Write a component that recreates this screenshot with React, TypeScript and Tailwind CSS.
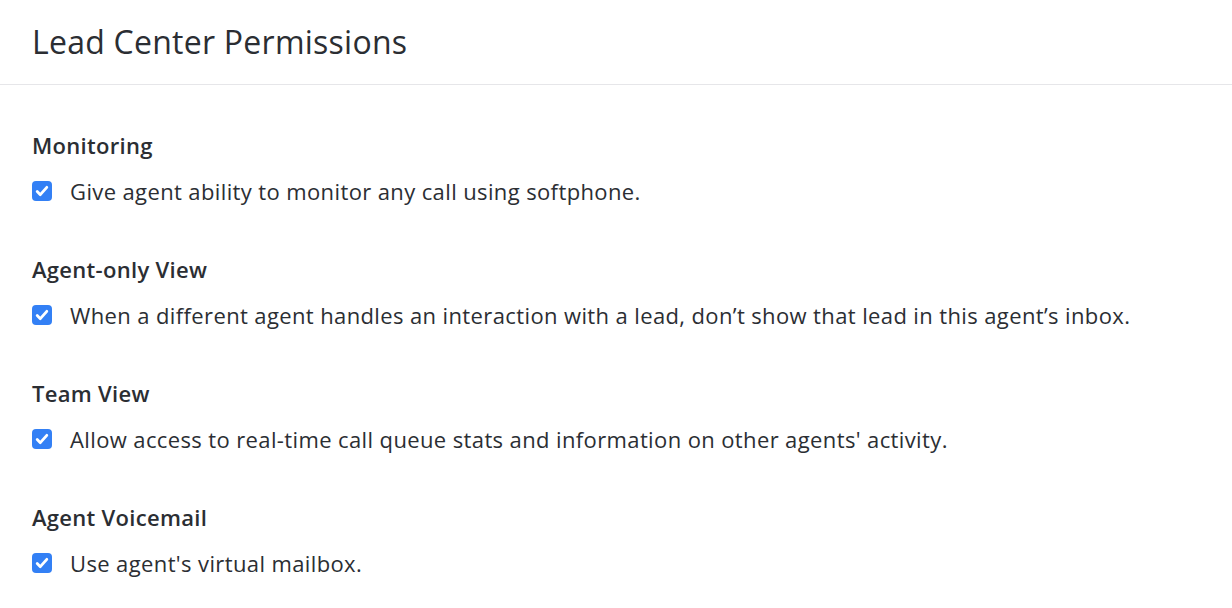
import React from "react";

const sections = [
  { title: "Monitoring", label: "Give agent ability to monitor any call using softphone." },
  {
    title: "Agent-only View",
    label: "When a different agent handles an interaction with a lead, don’t show that lead in this agent’s inbox.",
  },
  { title: "Team View", label: "Allow access to real-time call queue stats and information on other agents' activity." },
  { title: "Agent Voicemail", label: "Use agent's virtual mailbox." },
];

function Check() {
  return (
    <span className="flex h-5 w-5 shrink-0 items-center justify-center rounded-[4px] bg-[#3380f5]">
      <svg viewBox="0 0 16 16" className="h-4 w-4" fill="none">
        <path d="M3.2 8.6l3.1 3.1 6.5-7.4" stroke="white" strokeWidth="2.8" strokeLinecap="round" strokeLinejoin="round" />
      </svg>
    </span>
  );
}

export default function App() {
  return (
    <div className="h-[608px] w-[1232px] overflow-hidden bg-white text-[#2b2e33] [font-family:'Open_Sans',Lato,sans-serif]">
      <div className="flex h-[85px] items-center border-b border-[#e6e6e9] px-8">
        <h1 className="text-[32px] leading-none tracking-[0.25px]">Lead Center Permissions</h1>
      </div>
      <div className="flex flex-col gap-[50px] px-8 pt-[46px]">
        {sections.map((s) => (
          <div key={s.title} className="flex flex-col gap-[18px]">
            <h2 className="text-[22px] font-semibold leading-[28px] tracking-[0.3px]">{s.title}</h2>
            <label className="flex items-center gap-[18px]">
              <Check />
              <span className="text-[22px] leading-[28px] tracking-[0.38px]">{s.label}</span>
            </label>
          </div>
        ))}
      </div>
    </div>
  );
}
